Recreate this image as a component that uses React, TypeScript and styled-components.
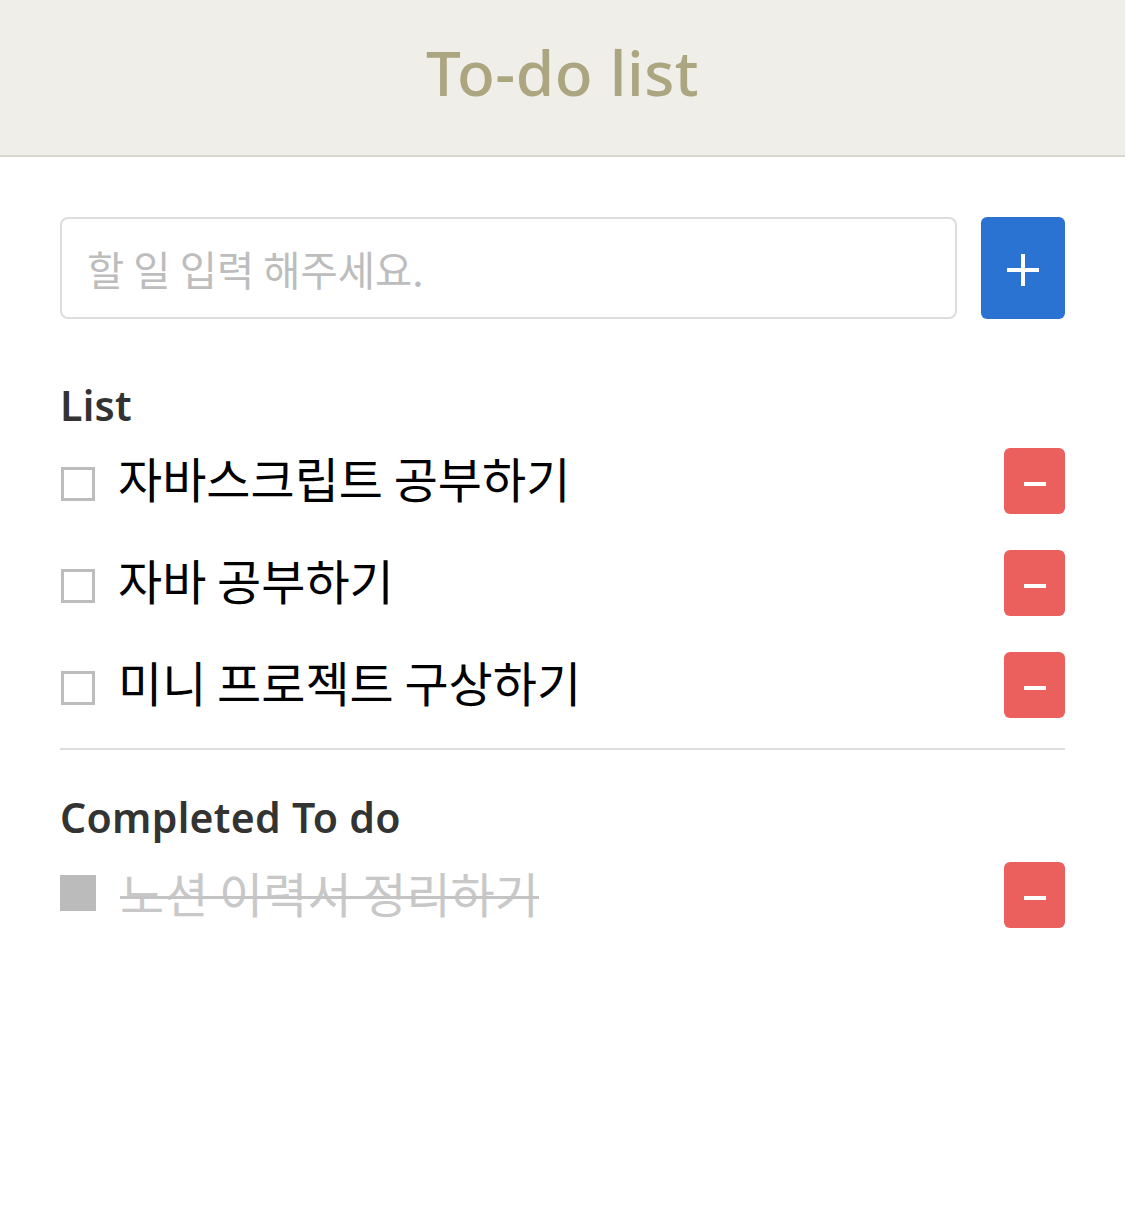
import React from "react";
import styled, { createGlobalStyle } from "styled-components";

const GlobalStyle = createGlobalStyle`
  html, body { margin: 0; padding: 0; background: #ffffff; }
  body { font-family: "Noto Sans", "Noto Sans CJK KR", sans-serif; }
  * { box-sizing: border-box; }
`;

const Page = styled.div`
  width: 1125px;
  min-height: 1231px;
  background: #ffffff;
`;

const Header = styled.header`
  height: 157px;
  background: #efeee9;
  border-bottom: 2px solid #d9d7cf;
  display: flex;
  align-items: center;
  justify-content: center;
  padding-bottom: 12px;
`;

const Title = styled.h1`
  margin: 0;
  font-family: "Noto Sans", sans-serif;
  font-size: 62px;
  font-weight: 500;
  color: #aca680;
  letter-spacing: 0.5px;
`;

const Main = styled.main`
  padding: 60px 60px;
  display: flex;
  flex-direction: column;
`;

const InputRow = styled.form`
  display: flex;
  gap: 24px;
  height: 102px;
`;

const TextInput = styled.input`
  flex: 1;
  height: 102px;
  border: 2px solid #dddddd;
  border-radius: 8px;
  padding: 0 25px;
  font-family: "Noto Sans CJK KR", sans-serif;
  font-size: 40.5px;
  color: #333;
  outline: none;
  &::placeholder { color: #bdbdbd; }
`;

const IconButton = styled.button<{ $color: string; $w: number; $h: number }>`
  width: ${(p) => p.$w}px;
  height: ${(p) => p.$h}px;
  flex: none;
  border: none;
  border-radius: 6px;
  background: ${(p) => p.$color};
  display: flex;
  align-items: center;
  justify-content: center;
  padding: 0;
  cursor: pointer;
`;

const PlusIcon = styled.span`
  position: relative;
  width: 32px;
  height: 32px;
  margin-top: 4px;
  &::before, &::after {
    content: "";
    position: absolute;
    background: #fff;
  }
  &::before { left: 0; right: 0; top: 14px; height: 4px; }
  &::after { top: 0; bottom: 0; left: 14px; width: 4px; }
`;

const MinusIcon = styled.span`
  width: 22px;
  height: 4px;
  margin-top: 6px;
  background: #fff;
`;

const SectionTitle = styled.h2<{ $top: number }>`
  margin: ${(p) => p.$top}px 0 0 0;
  font-family: "Noto Sans", sans-serif;
  font-size: 41px;
  line-height: 50px;
  font-weight: 600;
  color: #333333;
  letter-spacing: 0.3px;
`;

const ItemList = styled.ul<{ $top: number }>`
  list-style: none;
  margin: ${(p) => p.$top}px 0 0 0;
  padding: 0;
  display: flex;
  flex-direction: column;
  gap: 36px;
`;

const Row = styled.li`
  display: flex;
  align-items: center;
  height: 66px;
`;

const Check = styled.span<{ $done?: boolean }>`
  flex: none;
  width: ${(p) => (p.$done ? 36 : 34)}px;
  height: ${(p) => (p.$done ? 36 : 34)}px;
  margin-top: ${(p) => (p.$done ? -4 : 6)}px;
  border: ${(p) => (p.$done ? "none" : "3px solid #bdbdbd")};
  background: ${(p) => (p.$done ? "#bbbbbb" : "#ffffff")};
  margin-left: ${(p) => (p.$done ? 0 : 1)}px;
`;

const ItemText = styled.span<{ $done?: boolean }>`
  position: relative;
  margin-left: ${(p) => (p.$done ? 24 : 23)}px;
  margin-right: auto;
  font-family: "Noto Sans CJK KR", sans-serif;
  font-size: 48px;
  line-height: 66px;
  color: ${(p) => (p.$done ? "#c8c8c8" : "#000000")};
  margin-top: ${(p) => (p.$done ? -6 : -8)}px;
  &::after {
    content: "";
    display: ${(p) => (p.$done ? "block" : "none")};
    position: absolute;
    left: 0;
    right: 0;
    top: 37px;
    height: 3px;
    background: #c4c4c4;
  }
`;

const Divider = styled.hr`
  margin: 30px 0 0 0;
  border: none;
  height: 2px;
  background: #dddddd;
`;

const todos = ["자바스크립트 공부하기", "자바 공부하기", "미니 프로젝트 구상하기"];
const done = ["노션 이력서 정리하기"];

export default function App() {
  return (
    <Page>
      <GlobalStyle />
      <Header>
        <Title>To-do list</Title>
      </Header>
      <Main>
        <InputRow onSubmit={(e) => e.preventDefault()}>
          <TextInput placeholder="할 일 입력 해주세요." />
          <IconButton type="submit" $color="#2b73d3" $w={84} $h={102} aria-label="추가">
            <PlusIcon />
          </IconButton>
        </InputRow>

        <SectionTitle $top={61}>List</SectionTitle>
        <ItemList $top={18}>
          {todos.map((t) => (
            <Row key={t}>
              <Check />
              <ItemText>{t}</ItemText>
              <IconButton type="button" $color="#eb5f5d" $w={61} $h={66} aria-label="삭제">
                <MinusIcon />
              </IconButton>
            </Row>
          ))}
        </ItemList>

        <Divider />

        <SectionTitle $top={42}>Completed To do</SectionTitle>
        <ItemList $top={20}>
          {done.map((t) => (
            <Row key={t}>
              <Check $done />
              <ItemText $done>{t}</ItemText>
              <IconButton type="button" $color="#eb5f5d" $w={61} $h={66} aria-label="삭제">
                <MinusIcon />
              </IconButton>
            </Row>
          ))}
        </ItemList>
      </Main>
    </Page>
  );
}
